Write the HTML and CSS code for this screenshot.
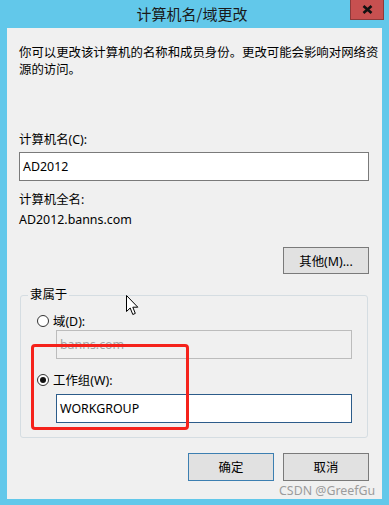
FILE: index.html
```html
<!DOCTYPE html>
<html lang="zh-CN">
<head>
    <meta charset="UTF-8">
    <title>计算机名/域更改</title>
    <link rel="stylesheet" href="styles.css">
</head>
<body>
    <div class="window">
        <div class="titlebar">
            <span></span>
            <span class="title">计算机名/域更改</span>
            <button class="close" aria-label="关闭">
                <svg width="11" height="9" viewBox="0 0 11 9"><path d="M1.5 1 L9.5 8 M9.5 1 L1.5 8" stroke="#111" stroke-width="2.6" fill="none"/></svg>
            </button>
        </div>
        <div class="panel">
            <p class="desc">你可以更改该计算机的名称和成员身份。更改可能会影响对网络资<br>源的访问。</p>

            <div class="label first">计算机名(C):</div>
            <div class="field">AD2012</div>

            <div class="label second">计算机全名:</div>
            <div class="value">AD2012.banns.com</div>

            <div class="btn-row top">
                <button class="btn">其他(M)...</button>
            </div>

            <div class="group">
                <span class="legend">隶属于</span>
                <div class="radio-row">
                    <span class="radio"></span>
                    <span>域(D):</span>
                </div>
                <div class="field sub disabled">banns.com</div>
                <div class="radio-row second">
                    <span class="radio checked"></span>
                    <span>工作组(W):</span>
                </div>
                <div class="field sub focused">WORKGROUP</div>
            </div>

            <div class="btn-row bottom">
                <button class="btn default">确定</button>
                <button class="btn">取消</button>
            </div>
        </div>
    </div>

    <!-- annotation, cursor and watermark from the screenshot -->
    <div class="highlight"></div>
    <svg class="cursor" width="13" height="21" viewBox="0 0 13 21">
        <path d="M0.5 0.5 L0.5 16.5 L4.2 13 L6.8 19.5 L9.3 18.4 L6.8 12.2 L11.8 12.2 Z" fill="#fff" stroke="#000" stroke-width="1"/>
    </svg>
    <div class="watermark">CSDN @GreefGu</div>
</body>
</html>
```

FILE: styles.css
```css
body {
    margin: 0;
    width: 389px;
    height: 505px;
    background: #62c8ea;
    font-family: "Noto Sans", "Noto Sans CJK SC", sans-serif;
    font-size: 12.4px;
    color: #000;
    position: relative;
    overflow: hidden;
}

.window {
    display: flex;
    flex-direction: column;
    height: 100%;
}

.titlebar {
    height: 28px;
    display: grid;
    grid-template-columns: 1fr auto 1fr;
    padding-right: 5px;
}

.title {
    font-family: "Noto Sans CJK SC", sans-serif;
    font-size: 15px;
    line-height: 28px;
    color: #1a1a1a;
}

.close {
    justify-self: end;
    width: 34px;
    height: 20px;
    margin: 0;
    padding: 0;
    border: 1px solid #8c3a3a;
    border-top: none;
    background: #c75050;
    display: flex;
    align-items: center;
    justify-content: center;
}

.panel {
    flex: 1;
    margin: 0 7px 6px 7px;
    padding: 0 13px 0 12px;
    background: #f0f0f0;
}

.desc {
    margin: 16px -8px 0 0;
    line-height: 17px;
    white-space: nowrap;
    font-family: "Noto Sans CJK SC", sans-serif;
}

.label,
.value {
    line-height: 16px;
}

.label.first {
    margin-top: 54px;
}

.label.second {
    margin-top: 11px;
}

.value {
    margin-top: 4px;
}

.field {
    box-sizing: border-box;
    height: 29px;
    margin-top: 4px;
    padding: 0 3px;
    line-height: 27px;
    background: #fff;
    border: 1px solid #7a7a7a;
}

.field.sub {
    width: 296px;
    margin-left: 19px;
}

.field.disabled {
    margin-top: 1px;
    background: #f0f0f0;
    border-color: #bcbcbc;
    color: #a3a3a3;
}

.field.focused {
    margin-top: 6px;
    border-color: #2c5c8a;
}

.btn-row {
    display: flex;
    justify-content: flex-end;
    gap: 9px;
}

.btn-row.top {
    margin-top: 19px;
}

.btn-row.bottom {
    margin-top: 15px;
}

.btn {
    box-sizing: border-box;
    width: 86px;
    height: 27px;
    margin: 0;
    padding: 0;
    font: inherit;
    color: #000;
    background: #e1e1e1;
    border: 1px solid #7a7a7a;
}

.btn-row.bottom .btn {
    height: 28px;
}

.btn.default {
    border-color: #3c7fb1;
}

.group {
    margin: 21px 1px 0 1px;
    padding: 18px 0 14px 16px;
    border: 1px solid #d5dde2;
    border-radius: 3px;
}

.legend {
    display: block;
    width: max-content;
    margin: -27px 0 10px -9px;
    padding: 0 2px;
    line-height: 16px;
    background: #f0f0f0;
}

.radio-row {
    display: flex;
    align-items: center;
    gap: 4px;
    height: 16px;
}

.radio-row.second {
    margin-top: 13px;
}

.radio {
    box-sizing: border-box;
    width: 12px;
    height: 12px;
    border: 1px solid #333;
    border-radius: 50%;
    background: #fff;
    display: flex;
    align-items: center;
    justify-content: center;
}

.radio.checked::after {
    content: "";
    width: 6px;
    height: 6px;
    border-radius: 50%;
    background: #111;
}

.highlight {
    position: absolute;
    left: 31px;
    top: 344px;
    width: 152px;
    height: 80px;
    border: 3px solid #f5221b;
    border-radius: 4px;
}

.cursor {
    position: absolute;
    left: 126px;
    top: 295px;
}

.watermark {
    position: absolute;
    left: 279px;
    top: 483px;
    line-height: 16px;
    color: #9c9c9c;
    font-size: 12.4px;
}
```
